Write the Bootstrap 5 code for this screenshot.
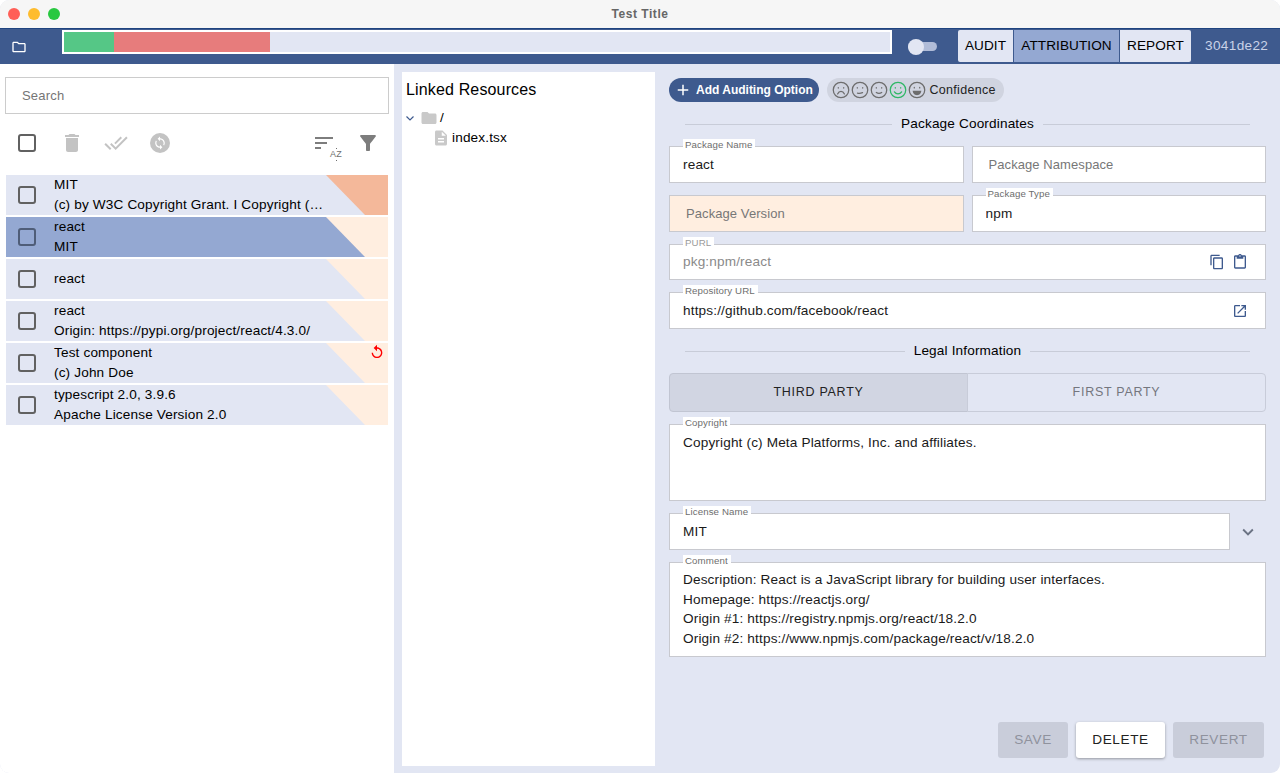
<!DOCTYPE html>
<html lang="en">
<head>
<meta charset="utf-8">
<title>Test Title</title>
<link href="https://cdn.jsdelivr.net/npm/bootstrap@5.3.0/dist/css/bootstrap.min.css" rel="stylesheet">
<style>
html,body{height:100%;margin:0;background:#fff;overflow:hidden}
body{font-family:"Liberation Sans",Arial,sans-serif;font-size:13.6px;letter-spacing:.15px;color:#000}
.app-win{width:1280px;height:773px;border-radius:9px;overflow:hidden;background:#e2e6f3}
.title-bar{height:28px;background:#f6f6f6;padding-left:8px;gap:8px}
.light{width:12px;height:12px;border-radius:50%}
.light-r{background:#ff5f57}.light-y{background:#febc2e}.light-g{background:#28c840}
.title-text{left:0;right:0;top:0;line-height:28px;font-size:12px;font-weight:700;color:#666;text-align:center;letter-spacing:.55px}
.top-bar{height:36px;background:#3e5a8e;border-top:1px solid #1f4480}
.folder-slot{width:62px;padding-left:11px}
.folder-slot svg{width:16px;height:16px;fill:#fff;display:block}
.prog{width:830px;height:24px;margin-top:1px;border:2px solid #fff;background:#e2e6f3}
.prog-g{width:50px;background:#55c786}
.prog-r{width:156px;background:#e77c7c}
.sw-slot{width:66px;padding-left:16px}
.sw-track{width:29px;height:9px;border-radius:5px;background:#b0bcd8}
.sw-thumb{width:16px;height:16px;left:0;top:-3.5px;border-radius:50%;background:#e2e6f3}
.tab-grp{margin-top:1px;height:32px}
.tab-grp .tab-btn{background:#e2e6f3;color:#000;font-size:13.6px;letter-spacing:.08px;border:0;padding:0;border-radius:0;line-height:32px;margin:0!important;flex:none}
.tab-grp .tab-btn:first-child{width:55px;border-radius:2px 0 0 2px;margin-right:1px!important}
.tab-grp .tab-btn:nth-child(2){width:105px;background:#94a8d2;margin-right:1px!important}
.tab-grp .tab-btn:last-child{width:71px;border-radius:0 2px 2px 0}
.ver-text{color:#c9d2e8;margin-left:14px;line-height:34px;font-size:13.6px;letter-spacing:.35px}
.body-row{height:709px}
.left-pane{width:394px;background:#fff;padding:13px 5px 0 5px}
.search-wrap{height:37px;border:1px solid #ccc;padding-left:16px;line-height:35px;color:#757575;font-size:13px}
.search-in{border:0;outline:0;padding:0;width:100%;height:35px;font:inherit;letter-spacing:.2px;display:block}
.search-in::placeholder{color:#757575;opacity:1}
.tools{height:58px;margin-bottom:3px;padding-left:13px}
.tools svg{width:24px;height:24px;flex:none;display:block}
.ic-box{width:18px;height:18px;border:2px solid #616161;border-radius:3px;flex:none}
.tool-g{fill:#c3c3c3;margin-left:20px}
.tool-first{margin-left:24px}
.tool-d{fill:#7d7d7d}
.sort-box{width:24px;height:24px;margin-right:20px}
.filter-ic{margin-right:9px}
.lic-list{gap:2px;padding-left:1px;width:383px}
.lic-item{height:40px;background:#e2e6f3;padding-left:12px}
.lic-item::after{content:"";position:absolute;right:0;top:0;bottom:0;width:62px;background:#ffeee0;clip-path:polygon(0 0,100% 0,100% 100%,39px 100%)}
.lic-hot::after{background:#f4b89a}
.lic-sel{background:#94a8d2}
.lic-sel .ic-box{border-color:#4f5d78}
.lic-txt{margin-left:18px;width:272px;line-height:20px;position:relative;z-index:1;white-space:nowrap}
.undo-ic{right:3px;top:1px;width:16px;height:16px;fill:#f00;z-index:1}
.mid-pane{width:253px;margin:8px 0 7px 8px;background:#fff;padding:9px 4px}
.mid-head{font-size:16px;line-height:18px;letter-spacing:.15px}
.tree-a{margin-top:9px;height:20px;line-height:20px}
.tree-b{height:20px;line-height:20px;padding-left:26px}
.right-pane{padding:14px 14px 0 14px;width:625px}
.pill-add{height:24px;width:150px;background:#3e5a8e;color:#fff;border-radius:12px;font-size:12px;font-weight:700;padding:0 0 0 5px;border:0;letter-spacing:0;white-space:nowrap}
.pill-add svg{width:18px;height:18px;fill:#fff;margin-right:4px;flex:none}
.pill-conf{height:24px;width:177px;margin-left:8px;background:#d0d4e0;border-radius:12px;padding-left:5px;font-size:12.5px;color:#222;letter-spacing:.3px}
.face{width:18px;height:18px;margin-right:1.1px;fill:none;stroke:#6d6d6d;stroke-width:1.4;stroke-linecap:round}
.face-on{stroke:#2eb765}
.sect-line{margin-top:12px;height:20px;padding:0 16px;gap:9px;line-height:20px;font-size:13.6px}
.sect-line>i{flex:1;height:1px;background:#c8ccd8}
.fld{background:#fff;border:1px solid #c8c9cf;height:37px;position:relative}
.fld-warn{background:#ffeee0}
.fld-in{background:transparent;border:0;outline:0;box-shadow:none;border-radius:0;height:100%;padding:0 13px;font-size:13.6px;letter-spacing:.15px;color:#1a1a1a;font-family:inherit}
.fld-in:focus{background:transparent;box-shadow:none}
.fld-in::placeholder{color:#777;opacity:1;font-size:13px;letter-spacing:.08px}
.fld-mute{color:#8a8a8a}
.fld-slim .fld-in{padding-bottom:2px}
.tag{position:absolute;left:13px;top:-8px;background:#fff;padding:0 3px 0 2px;font-size:9.7px;line-height:12px;color:#6e6e6e;letter-spacing:.1px}
.tag-soft{color:#9a9a9a}
.fld-area{font-size:13.6px;line-height:19.6px;padding:8px 13px 0;white-space:pre-line;color:#1a1a1a}
.fld-tight{padding-top:7px}
.end-ic{width:16px;height:16px;fill:#3e5a8e;flex:none}
.party{margin-top:12px;height:39px}
.party .btn{border:1px solid #c8ccd9;border-radius:0;font-size:12.5px;letter-spacing:.72px;line-height:37px;padding:0;background:#e2e6f3;color:#74767e;width:50%}
.party .btn:first-child{background:#d1d5e2;border-color:#c1c5d2;color:#222;border-radius:4px 0 0 4px}
.party .btn:last-child{border-radius:0 4px 4px 0}
.act-row{margin-top:65px;gap:8px;padding-right:2px}
.act-btn{height:36px;border-radius:3px;border:0;font-size:13.6px;letter-spacing:.6px;padding:0}
.act-off{background:#c9cdda;color:#8f929d}
.act-on{background:#fff;color:#222;box-shadow:0 1px 3px rgba(0,0,0,.35)}
.az-txt{font-size:9px;line-height:9px;color:#6f6f6f;letter-spacing:.2px;left:18px;top:19px}
.az-txt::before,.az-txt::after{content:"";position:absolute;left:5.5px;width:1px;height:1px;background:#6f6f6f}
.az-txt::before{top:-2px}
.az-txt::after{bottom:-2px}
</style>
</head>
<body>
<svg width="0" height="0" class="position-absolute">
<defs>
<symbol id="f1" viewBox="0 0 20 20"><circle cx="10" cy="10" r="8.6"/><path d="M6.2 14.4c1-2.2 2.4-3 3.8-3s2.800.8 3.800 3M7 7.400v.5M13 7.400v.5"/></symbol>
<symbol id="f2" viewBox="0 0 20 20"><circle cx="10" cy="10" r="8.6"/><path d="M7.200 13.500c1.800.4 3.800.2 5.600-.6M7 7.400v.5M13 7.400v.5"/></symbol>
<symbol id="f3" viewBox="0 0 20 20"><circle cx="10" cy="10" r="8.6"/><path d="M7 12.800c1.800 1.200 4.200 1.200 6 0M7 7.400v.5M13 7.400v.5"/></symbol>
<symbol id="f4" viewBox="0 0 20 20"><circle cx="10" cy="10" r="8.6"/><path d="M6 12c2 3 6 3 8 0M7 7.400v.5M13 7.400v.5"/></symbol>
<symbol id="f5" viewBox="0 0 20 20"><circle cx="10" cy="10" r="8.6"/><path fill="#6d6d6d" d="M6 11.600h8c-.5 2.600-2.200 3.400-4 3.400s-3.500-.8-4-3.400zM7 7.200v.5M13 7.200v.5"/></symbol>
</defs>
</svg>
<div class="app-win d-flex flex-column">
  <div class="title-bar position-relative d-flex align-items-center">
    <span class="light light-r"></span><span class="light light-y"></span><span class="light light-g"></span>
    <div class="title-text position-absolute">Test Title</div>
  </div>
  <div class="top-bar d-flex">
    <div class="folder-slot d-flex align-items-center"><svg viewBox="0 0 24 24"><path d="M9.17 6l2 2H20v10H4V6h5.17M10 4H4c-1.1 0-1.99.9-1.99 2L2 18c0 1.1.9 2 2 2h16c1.1 0 2-.9 2-2V8c0-1.1-.9-2-2-2h-8l-2-2z"/></svg></div>
    <div class="prog d-flex"><div class="prog-g"></div><div class="prog-r"></div></div>
    <div class="sw-slot d-flex align-items-center"><div class="sw-track position-relative"><div class="sw-thumb position-absolute"></div></div></div>
    <div class="btn-group tab-grp" role="group">
      <button class="btn tab-btn">AUDIT</button><button class="btn tab-btn">ATTRIBUTION</button><button class="btn tab-btn">REPORT</button>
    </div>
    <div class="ver-text">3041de22</div>
  </div>
  <div class="body-row d-flex">
    <div class="left-pane">
      <div class="search-wrap"><input class="search-in" placeholder="Search"></div>
      <div class="tools d-flex align-items-center">
        <span class="ic-box"></span>
        <svg class="tool-g tool-first" viewBox="0 0 24 24"><path d="M6 19c0 1.1.9 2 2 2h8c1.1 0 2-.9 2-2V7H6v12zM19 4h-3.5l-1-1h-5l-1 1H5v2h14V4z"/></svg>
        <svg class="tool-g" viewBox="0 0 24 24"><path d="M18 7l-1.41-1.41-6.34 6.34 1.41 1.41L18 7zm4.24-1.41L11.66 16.17 7.48 12l-1.41 1.41L11.66 19l12-12-1.42-1.41zM.41 13.41L6 19l1.41-1.41L1.83 12 .41 13.41z"/></svg>
        <svg class="tool-g" viewBox="0 0 24 24"><circle cx="12" cy="12" r="10"/><g transform="translate(4.8 4.8) scale(.6)" fill="#fff"><path d="M12 4V1L8 5l4 4V6c3.31 0 6 2.69 6 6 0 1.01-.25 1.97-.7 2.8l1.46 1.46C19.54 15.03 20 13.57 20 12c0-4.42-3.58-8-8-8zm0 14c-3.31 0-6-2.69-6-6 0-1.01.25-1.97.7-2.8L5.24 7.74C4.46 8.97 4 10.43 4 12c0 4.42 3.58 8 8 8v3l4-4-4-4v3z"/></g></svg>
        <div class="sort-box position-relative ms-auto">
          <svg class="tool-d" viewBox="0 0 24 24"><path d="M3 18h6v-2H3v2zM3 6v2h18V6H3zm0 7h12v-2H3v2z"/></svg>
          <span class="az-txt position-absolute">AZ</span>
        </div>
        <svg class="tool-d filter-ic" viewBox="0 0 24 24"><path d="M4.25 5.61C6.27 8.2 10 13 10 13v6c0 .55.45 1 1 1h2c.55 0 1-.45 1-1v-6s3.72-4.8 5.74-7.39c.51-.66.04-1.61-.79-1.61H5.04c-.83 0-1.3.95-.79 1.61z"/></svg>
      </div>
      <div class="lic-list d-flex flex-column">
        <div class="lic-item lic-hot position-relative d-flex align-items-center"><span class="ic-box"></span><div class="lic-txt"><div>MIT</div><div>(c) by W3C Copyright Grant. I Copyright (…</div></div></div>
        <div class="lic-item lic-sel position-relative d-flex align-items-center"><span class="ic-box"></span><div class="lic-txt"><div>react</div><div>MIT</div></div></div>
        <div class="lic-item position-relative d-flex align-items-center"><span class="ic-box"></span><div class="lic-txt"><div>react</div></div></div>
        <div class="lic-item position-relative d-flex align-items-center"><span class="ic-box"></span><div class="lic-txt"><div>react</div><div>Origin: https://pypi.org/project/react/4.3.0/</div></div></div>
        <div class="lic-item position-relative d-flex align-items-center"><span class="ic-box"></span><div class="lic-txt"><div>Test component</div><div>(c) John Doe</div></div><svg class="undo-ic position-absolute" viewBox="0 0 24 24"><path d="M12 5V1L7 6l5 5V7c3.31 0 6 2.69 6 6s-2.69 6-6 6-6-2.69-6-6H4c0 4.42 3.58 8 8 8s8-3.58 8-8-3.58-8-8-8z"/></svg></div>
        <div class="lic-item position-relative d-flex align-items-center"><span class="ic-box"></span><div class="lic-txt"><div>typescript 2.0, 3.9.6</div><div>Apache License Version 2.0</div></div></div>
      </div>
    </div>
    <div class="mid-pane">
      <div class="mid-head">Linked Resources</div>
      <div class="tree-a d-flex align-items-center">
        <svg width="8" height="8" viewBox="0 0 8 8" fill="none" stroke="#3e5a8e" stroke-width="1.2"><path d="M.5 2.500 4 6l3.500-3.500"/></svg>
        <svg style="margin-left:6px" width="18" height="18" viewBox="0 0 24 24" fill="#c9c9c9"><path d="M10 4H4c-1.1 0-1.99.9-1.99 2L2 18c0 1.1.9 2 2 2h16c1.1 0 2-.9 2-2V8c0-1.1-.9-2-2-2h-8l-2-2z"/></svg>
        <span style="margin-left:2px">/</span>
      </div>
      <div class="tree-b d-flex align-items-center">
        <svg width="18" height="18" viewBox="0 0 24 24" fill="#c9c9c9"><path d="M14 2H6c-1.1 0-1.99.9-1.99 2L4 20c0 1.1.89 2 1.99 2H18c1.1 0 2-.9 2-2V8l-6-6zm2 16H8v-2h8v2zm0-4H8v-2h8v2zm-3-5V3.5L18.5 9H13z"/></svg>
        <span style="margin-left:2px">index.tsx</span>
      </div>
    </div>
    <div class="right-pane">
      <div class="d-flex">
        <button class="pill-add d-flex align-items-center"><svg viewBox="0 0 24 24"><path d="M19 13h-6v6h-2v-6H5v-2h6V5h2v6h6v2z"/></svg>Add Auditing Option</button>
        <div class="pill-conf d-flex align-items-center">
          <svg class="face"><use href="#f1"/></svg><svg class="face"><use href="#f2"/></svg><svg class="face"><use href="#f3"/></svg><svg class="face face-on"><use href="#f4"/></svg><svg class="face"><use href="#f5"/></svg>
          <span style="margin-left:2px">Confidence</span>
        </div>
      </div>
      <div class="sect-line d-flex align-items-center"><i></i><span>Package Coordinates</span><i></i></div>
      <div class="row g-0" style="margin-top:12px">
        <div class="col-6" style="padding-right:4px"><div class="fld"><span class="tag">Package Name</span><input class="form-control fld-in" value="react"></div></div>
        <div class="col-6" style="padding-left:4px"><div class="fld"><input class="form-control fld-in" style="padding-left:16px" placeholder="Package Namespace"></div></div>
      </div>
      <div class="row g-0" style="margin-top:12px">
        <div class="col-6" style="padding-right:4px"><div class="fld fld-warn"><input class="form-control fld-in" style="padding-left:16px" placeholder="Package Version"></div></div>
        <div class="col-6" style="padding-left:4px"><div class="fld"><span class="tag">Package Type</span><input class="form-control fld-in" value="npm"></div></div>
      </div>
      <div class="fld fld-slim d-flex align-items-center" style="margin-top:12px;height:36px;padding-right:17px"><span class="tag tag-soft">PURL</span><input class="form-control fld-in fld-mute" value="pkg:npm/react">
        <svg class="end-ic" viewBox="0 0 24 24"><path d="M16 1H4c-1.1 0-2 .9-2 2v14h2V3h12V1zm3 4H8c-1.1 0-2 .9-2 2v14c0 1.1.9 2 2 2h11c1.1 0 2-.9 2-2V7c0-1.1-.9-2-2-2zm0 16H8V7h11v14z"/></svg>
        <svg class="end-ic" style="margin-left:7px" viewBox="0 0 24 24"><path d="M19 2h-4.18C14.4.84 13.3 0 12 0c-1.3 0-2.4.84-2.82 2H5c-1.1 0-2 .9-2 2v16c0 1.1.9 2 2 2h14c1.1 0 2-.9 2-2V4c0-1.1-.9-2-2-2zm-7 0c.55 0 1 .45 1 1s-.45 1-1 1-1-.45-1-1 .45-1 1-1zm7 18H5V4h2v3h10V4h2v16z"/></svg>
      </div>
      <div class="fld d-flex align-items-center" style="margin-top:12px;padding-right:17px"><span class="tag">Repository URL</span><input class="form-control fld-in" value="https://github.com/facebook/react">
        <svg class="end-ic" viewBox="0 0 24 24"><path d="M19 19H5V5h7V3H5c-1.11 0-2 .9-2 2v14c0 1.1.89 2 2 2h14c1.1 0 2-.9 2-2v-7h-2v7zM14 3v2h3.59l-9.83 9.83 1.41 1.41L19 6.41V10h2V3h-7z"/></svg>
      </div>
      <div class="sect-line d-flex align-items-center"><i></i><span>Legal Information</span><i></i></div>
      <div class="btn-group w-100 party" role="group"><button class="btn">THIRD PARTY</button><button class="btn">FIRST PARTY</button></div>
      <div class="fld fld-area" style="margin-top:12px;height:77px"><span class="tag">Copyright</span>Copyright (c) Meta Platforms, Inc. and affiliates.</div>
      <div class="d-flex align-items-center" style="margin-top:12px">
        <div class="fld flex-grow-1"><span class="tag">License Name</span><input class="form-control fld-in" value="MIT"></div>
        <svg style="margin:0 7px;fill:#6b7384" width="22" height="22" viewBox="0 0 24 24"><path d="M16.59 8.59 12 13.17 7.41 8.59 6 10l6 6 6-6z"/></svg>
      </div>
      <div class="fld fld-area fld-tight" style="margin-top:12px;height:95px"><span class="tag">Comment</span>Description: React is a JavaScript library for building user interfaces.
Homepage: https://reactjs.org/
Origin #1: https://registry.npmjs.org/react/18.2.0
Origin #2: https://www.npmjs.com/package/react/v/18.2.0</div>
      <div class="act-row d-flex justify-content-end">
        <button class="btn act-btn act-off" style="width:70px">SAVE</button>
        <button class="btn act-btn act-on" style="width:89px">DELETE</button>
        <button class="btn act-btn act-off" style="width:91px">REVERT</button>
      </div>
    </div>
  </div>
</div>
</body>
</html>
